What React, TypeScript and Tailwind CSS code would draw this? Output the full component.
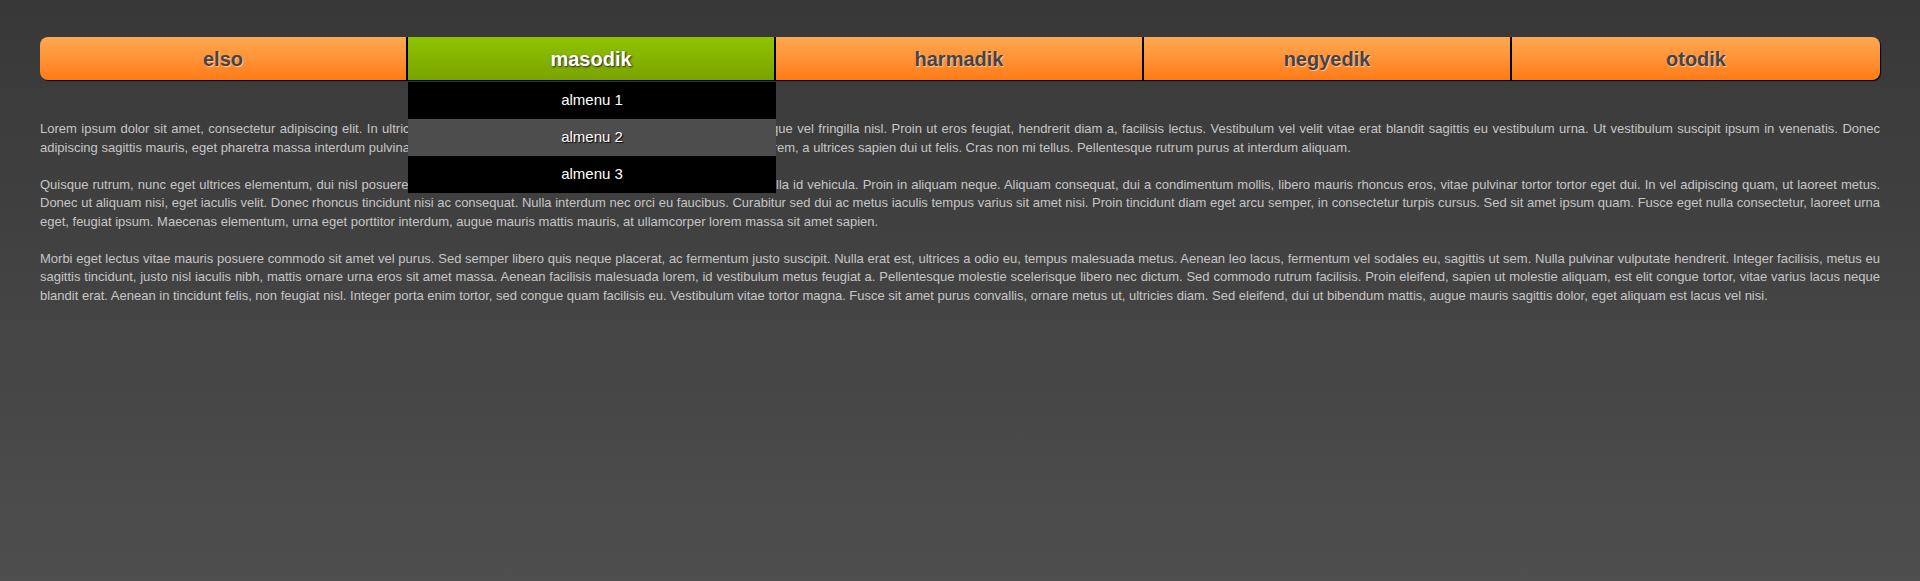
import { useState } from "react";

const menu = [
  { label: "elso" },
  { label: "masodik", sub: ["almenu 1", "almenu 2", "almenu 3"] },
  { label: "harmadik" },
  { label: "negyedik" },
  { label: "otodik" },
];

const paragraphs = [
  "Lorem ipsum dolor sit amet, consectetur adipiscing elit. In ultricies tellus nec mauris tempor, vitae dignissim orci aliquet. Quisque vel fringilla nisl. Proin ut eros feugiat, hendrerit diam a, facilisis lectus. Vestibulum vel velit vitae erat blandit sagittis eu vestibulum urna. Ut vestibulum suscipit ipsum in venenatis. Donec adipiscing sagittis mauris, eget pharetra massa interdum pulvinar. Curabitur nunc nec magna faucibus dictum, sed accumsan lorem, a ultrices sapien dui ut felis. Cras non mi tellus. Pellentesque rutrum purus at interdum aliquam.",
  "Quisque rutrum, nunc eget ultrices elementum, dui nisl posuere lacus, quis tincidunt sem tortor at metus. Integer sed augue nulla id vehicula. Proin in aliquam neque. Aliquam consequat, dui a condimentum mollis, libero mauris rhoncus eros, vitae pulvinar tortor tortor eget dui. In vel adipiscing quam, ut laoreet metus. Donec ut aliquam nisi, eget iaculis velit. Donec rhoncus tincidunt nisi ac consequat. Nulla interdum nec orci eu faucibus. Curabitur sed dui ac metus iaculis tempus varius sit amet nisi. Proin tincidunt diam eget arcu semper, in consectetur turpis cursus. Sed sit amet ipsum quam. Fusce eget nulla consectetur, laoreet urna eget, feugiat ipsum. Maecenas elementum, urna eget porttitor interdum, augue mauris mattis mauris, at ullamcorper lorem massa sit amet sapien.",
  "Morbi eget lectus vitae mauris posuere commodo sit amet vel purus. Sed semper libero quis neque placerat, ac fermentum justo suscipit. Nulla erat est, ultrices a odio eu, tempus malesuada metus. Aenean leo lacus, fermentum vel sodales eu, sagittis ut sem. Nulla pulvinar vulputate hendrerit. Integer facilisis, metus eu sagittis tincidunt, justo nisl iaculis nibh, mattis ornare urna eros sit amet massa. Aenean facilisis malesuada lorem, id vestibulum metus feugiat a. Pellentesque molestie scelerisque libero nec dictum. Sed commodo rutrum facilisis. Proin eleifend, sapien ut molestie aliquam, est elit congue tortor, vitae varius lacus neque blandit erat. Aenean in tincidunt felis, non feugiat nisl. Integer porta enim tortor, sed congue quam facilisis eu. Vestibulum vitae tortor magna. Fusce sit amet purus convallis, ornare metus ut, ultricies diam. Sed eleifend, dui ut bibendum mattis, augue mauris sagittis dolor, eget aliquam est lacus vel nisi.",
];

export default function App() {
  const [active] = useState(1);
  const [hovered] = useState(1);

  return (
    <div className="min-h-screen bg-linear-to-b from-[#383838] to-[#4e4e4e] px-10 pt-[37px] pb-10 font-['Liberation_Sans',Arial,sans-serif]">
      {/* Menu bar */}
      <ul className="relative z-10 grid grid-cols-5 h-[43px] rounded-lg shadow-[1px_1px_1px_#000]">
        {menu.map((item, i) => {
          const isActive = i === active;
          return (
            <li
              key={item.label}
              className={[
                "relative flex items-center justify-center",
                i < menu.length - 1 ? "border-r-2 border-black" : "",
                i === 0 ? "rounded-l-lg" : "",
                i === menu.length - 1 ? "rounded-r-lg" : "",
                isActive
                  ? "bg-linear-to-b from-[#8fc400] to-[#7aa300] text-white [text-shadow:1px_1px_2px_#222]"
                  : "bg-linear-to-b from-[#ffa84f] to-[#ff7b12] text-[#444] [text-shadow:1px_1px_1px_rgba(255,255,255,0.55)]",
              ].join(" ")}
            >
              <span className="text-[20px] font-bold leading-none">{item.label}</span>

              {isActive && item.sub && (
                <ul className="absolute left-0 top-[45px] w-[368px]">
                  {item.sub.map((s, j) => (
                    <li
                      key={s}
                      className={[
                        "h-[37px] flex items-center justify-center text-[15px] text-white font-normal [text-shadow:1px_1px_1px_#000]",
                        j === hovered ? "bg-[#4d4d4d]" : "bg-black",
                      ].join(" ")}
                    >
                      {s}
                    </li>
                  ))}
                </ul>
              )}
            </li>
          );
        })}
      </ul>

      {/* Content */}
      <div className="mt-10 text-[13px] leading-[18.5px] text-[#c6c6c6] text-justify">
        {paragraphs.map((p, i) => (
          <p key={i} className="mb-[18.5px]">
            {p}
          </p>
        ))}
      </div>
    </div>
  );
}
